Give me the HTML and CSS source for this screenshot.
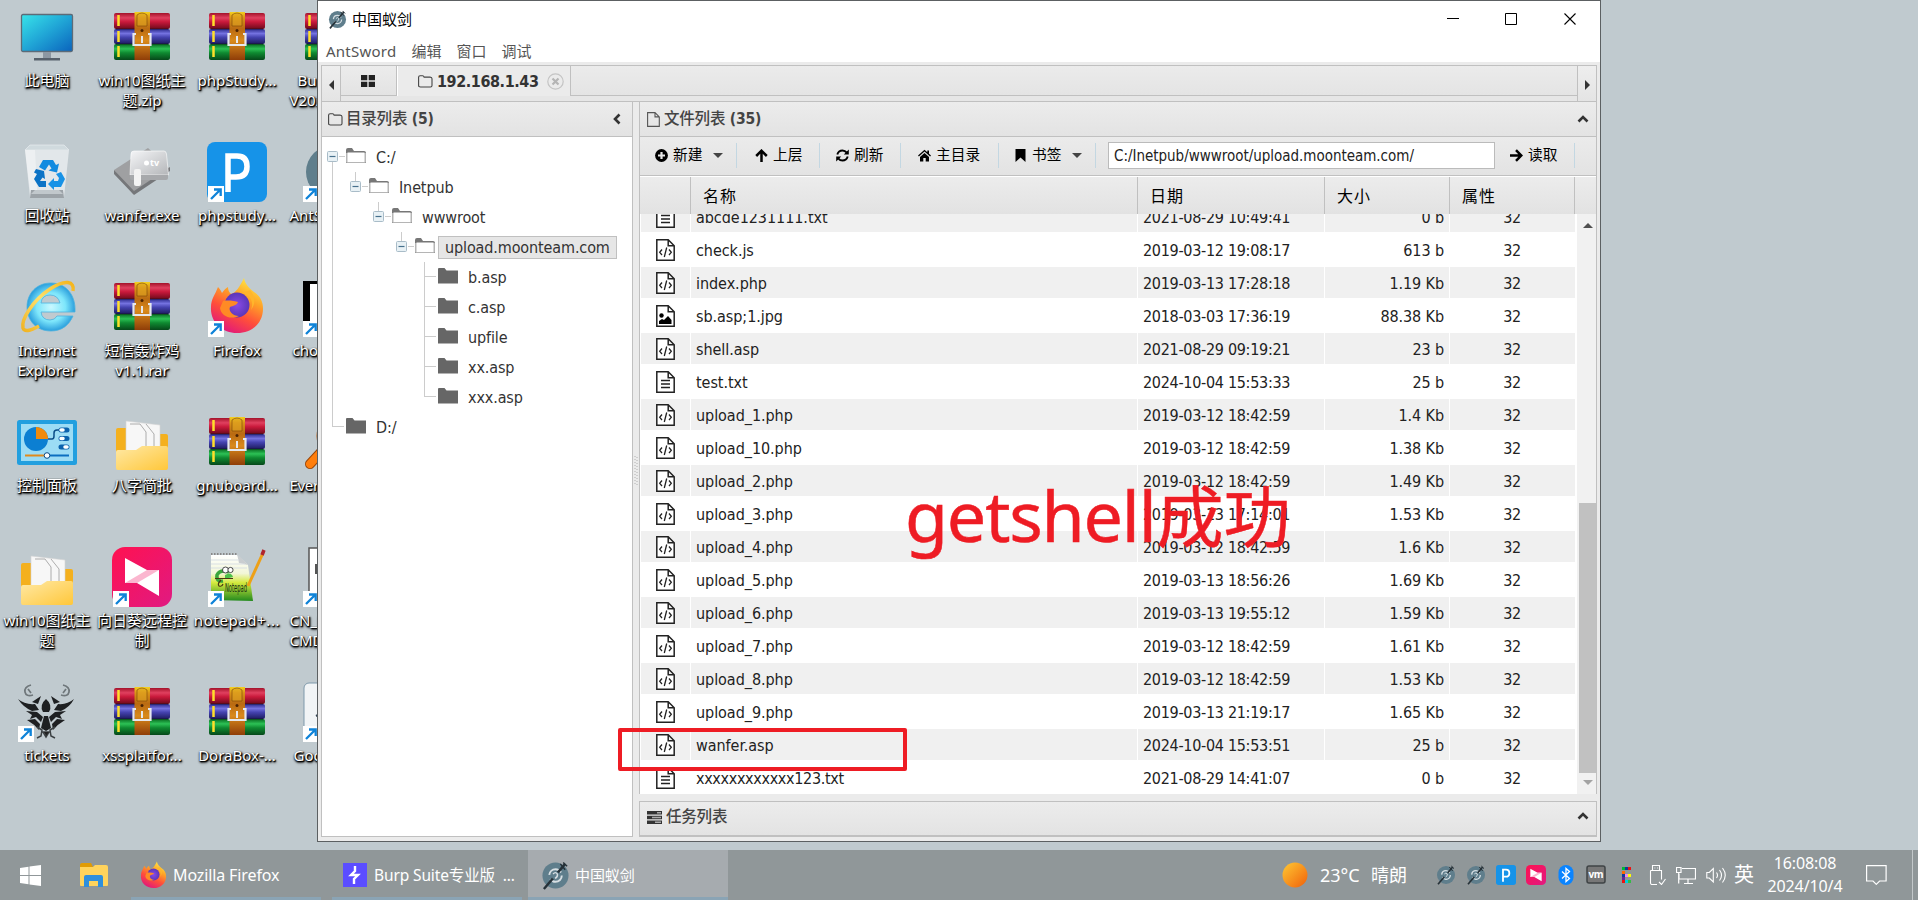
FILE: index.html
```html
<!DOCTYPE html>
<html lang="zh-CN">
<head>
<meta charset="utf-8">
<title>中国蚁剑</title>
<link rel="stylesheet" href="styles.css">
</head>
<body>
<svg class="defs" aria-hidden="true">
  <defs>
    <linearGradient id="red" x1="0" y1="0" x2="0" y2="1"><stop offset="0" stop-color="#a3122a"/><stop offset=".3" stop-color="#e0405f"/><stop offset=".55" stop-color="#c9193b"/><stop offset="1" stop-color="#6d0a1c"/></linearGradient>
    <linearGradient id="blue" x1="0" y1="0" x2="0" y2="1"><stop offset="0" stop-color="#2b2a8c"/><stop offset=".3" stop-color="#7472e0"/><stop offset=".55" stop-color="#4543b0"/><stop offset="1" stop-color="#1d1b5e"/></linearGradient>
    <linearGradient id="green" x1="0" y1="0" x2="0" y2="1"><stop offset="0" stop-color="#086a20"/><stop offset=".3" stop-color="#2cc155"/><stop offset=".55" stop-color="#0f8a31"/><stop offset="1" stop-color="#06481a"/></linearGradient>
    <linearGradient id="belt" x1="0" y1="0" x2="0" y2="1"><stop offset="0" stop-color="#f5d21f"/><stop offset=".12" stop-color="#d99417"/><stop offset=".35" stop-color="#b96a12"/><stop offset=".6" stop-color="#d98a1c"/><stop offset="1" stop-color="#8f3d08"/></linearGradient>
    <linearGradient id="screen" x1="0" y1="0" x2="1" y2="1"><stop offset="0" stop-color="#38e4ea"/><stop offset=".5" stop-color="#20a5d6"/><stop offset="1" stop-color="#0a63bd"/></linearGradient>
    <linearGradient id="fold" x1="0" y1="0" x2="1" y2="1"><stop offset="0" stop-color="#ffe9a6"/><stop offset="1" stop-color="#ffc73a"/></linearGradient>
    <linearGradient id="foxg" x1=".8" y1="0" x2=".3" y2="1"><stop offset="0" stop-color="#fff14a"/><stop offset=".35" stop-color="#ffa226"/><stop offset=".65" stop-color="#ff4f3a"/><stop offset="1" stop-color="#e0157e"/></linearGradient>
    <radialGradient id="foxp"><stop offset="0" stop-color="#8a4be6"/><stop offset="1" stop-color="#5a36b8"/></radialGradient>
    <radialGradient id="ieg"><stop offset="0" stop-color="#c9f8ff"/><stop offset=".6" stop-color="#7de6fb"/><stop offset="1" stop-color="#2b9fdd"/></radialGradient>
    <linearGradient id="gold" x1="0" y1="1" x2="1" y2="0"><stop offset="0" stop-color="#f0b323"/><stop offset=".5" stop-color="#ffe06a"/><stop offset="1" stop-color="#f4b41c"/></linearGradient>
    <linearGradient id="pink" x1="0" y1="0" x2="1" y2="1"><stop offset="0" stop-color="#ff1150"/><stop offset="1" stop-color="#e01a82"/></linearGradient>
    <linearGradient id="silver" x1="0" y1="0" x2="1" y2="1"><stop offset="0" stop-color="#f4f5f7"/><stop offset="1" stop-color="#b4b6b9"/></linearGradient>
    <linearGradient id="sun" x1="0" y1="0" x2="1" y2="1"><stop offset="0" stop-color="#ffc933"/><stop offset="1" stop-color="#f0600a"/></linearGradient>
    <linearGradient id="notepad" x1="0" y1="0" x2="0" y2="1"><stop offset="0" stop-color="#ffffff"/><stop offset=".4" stop-color="#f2f6d8"/><stop offset=".6" stop-color="#d5ea3e"/><stop offset="1" stop-color="#228a1d"/></linearGradient>

    <symbol id="i-rar" viewBox="0 0 60 60">
      <rect x="2" y="6" width="56" height="16" rx="2" fill="url(#red)"/>
      <rect x="2" y="22" width="56" height="15" rx="2" fill="url(#blue)"/>
      <rect x="2" y="37" width="56" height="16" rx="2" fill="url(#green)"/>
      <path d="M6.500 8v11M6.500 24v11M6.500 39v11" stroke="#ffdf2b" stroke-width="2.500"/>
      <path d="M4 22h52M4 37h52" stroke="#111" stroke-opacity=".5"/>
      <rect x="22.500" y="5" width="15.500" height="48" fill="url(#belt)"/>
      <path d="M25 8q5-4 10 0v11H25z" fill="#e0a321" fill-opacity=".6" stroke="#7a4408" stroke-width=".6"/>
      <circle cx="30" cy="23.500" r="1.500" fill="#4b2303"/>
      <path d="M24 27h-2.500v11h17V27H36" fill="none" stroke="#e6e8ee" stroke-width="2.200"/>
      <path d="M30 29v7" stroke="#e6e8ee" stroke-width="2"/>
    </symbol>
    <symbol id="i-shortcut" viewBox="0 0 16 16"><rect width="16" height="16" fill="#fff"/><path d="M3 13 12 4M6 3.500h6.700V10" fill="none" stroke="#0f83d8" stroke-width="2.300"/></symbol>
    <symbol id="i-pc" viewBox="0 0 60 60">
      <rect x="4.500" y="7.500" width="51" height="37" rx="1.500" fill="url(#screen)" stroke="#5d6b78" stroke-width="1.300"/>
      <path d="M26 45h8v7h-8z" fill="#8c97a2"/><path d="M17 51h26v2.500H17z" fill="#56606b"/>
    </symbol>
    <symbol id="i-bin" viewBox="0 0 60 60">
      <path d="M8 8 13 3h34l5 5z" fill="#d0dade" stroke="#e8edef" stroke-width=".7"/>
      <path d="M8 8h44l-5 47H13z" fill="#e2e7ea"/><path d="M8 8h10l2 40h-7z" fill="#fff" fill-opacity=".4"/>
      <path d="M14 48h32l1 8H13z" fill="#9ca3a8"/><path d="M18 48h24l4 4H14z" fill="#c1c8cc"/>
      <path d="M22 25l4-7h10l3 5 3-1.500-2 9-8.500-2 3-2-2.500-4-4 6z" fill="#128be0"/>
      <path d="M19 27l8 2 1 8-2.500-1.500-2.500 3.500h6v6h-7l-5-8 3-5-3-1.500z" fill="#0b73c6"/>
      <path d="M31 42l6-6v3h4l1-3-3-4 5-2 4 7-4 8h-7v3z" fill="#1892e6"/>
    </symbol>
    <symbol id="i-exe" viewBox="0 0 60 60">
      <path d="M2 28 36 6 58 27 21 52z" fill="#9fa0a2"/><path d="M2 28 22 49 58 25v4L22 53 2 32z" fill="#75777a"/>
      <path d="M22 9h30q2 0 2.500 3l2 21H18l1-21q0-3 3-3z" fill="url(#silver)" stroke="#fff" stroke-width=".6"/>
      <path d="M18 33h38v3q0 2-2 2H20q-2 0-2-2z" fill="#a7a9ac"/>
      <rect x="22" y="27" width="7" height="17" rx="2" fill="#f3f3f3"/>
      <text x="38" y="24" font-family="Noto Sans" font-size="9" font-weight="700" fill="#fff">tv</text><circle cx="34.500" cy="21" r="2.500" fill="#fff"/>
    </symbol>
    <symbol id="i-phps" viewBox="0 0 60 60"><rect width="60" height="60" rx="8" fill="#1693e8"/><path d="M21 50V14h9q10 0 10 10.500T29 35h-7" fill="none" stroke="#fff" stroke-width="5.500"/></symbol>
    <symbol id="i-ant" viewBox="0 0 60 60">
      <circle cx="30" cy="30" r="27" fill="#5f7e8c"/><circle cx="30" cy="30" r="13" fill="none" stroke="#d7dfe3" stroke-width="4" stroke-dasharray="32 9"/>
      <path d="M6 58 50 6" stroke="#263138" stroke-width="5"/><path d="M40 6l10 12M46 3l8 8" stroke="#263138" stroke-width="3"/>
      <circle cx="30" cy="30" r="8" fill="#5f7e8c"/><path d="M25 27q5-6 9 0 1 6-5 9" fill="none" stroke="#d7dfe3" stroke-width="3"/>
    </symbol>
    <symbol id="i-ie" viewBox="0 0 60 60">
      <path fill-rule="evenodd" d="M34 6C19 6 10 17 10 30s9 24 24 24c11 0 18-6 22-15H40q-2 4-7 4-8 0-9-8h34C59 18 49 6 34 6zM24 26q1-8 9-8t10 8z" fill="url(#ieg)" stroke="#4bb3de" stroke-width=".8"/>
      <path d="M56 14C58 4 48 2 33 12 15 24 4 43 6 51q2 6 16-2" fill="none" stroke="url(#gold)" stroke-width="3.500"/>
    </symbol>
    <symbol id="i-fox" viewBox="0 0 60 60">
      <path d="M37 1c1 6 5 10 10 14 6 4 9 9 9 17 0 14-11 24-26 24S3 45 4 30c0-8 4-12 7-20 2 2 3 4 4 6 2-3 4-5 6-6 0 3 1 5 3 7 5-1 9-8 13-16z" fill="url(#foxg)"/>
      <circle cx="30" cy="28" r="12.500" fill="url(#foxp)"/>
      <path d="M16 24c5-1 12 0 15 1-1 3-5 4-8 5-2 4 3 9 9 9-9 4-18 0-19-8z" fill="#ff8a25"/><path d="M35 16c9 2 12 9 9 17 6-8 3-15-1-20z" fill="#ffb52c"/>
    </symbol>
    <symbol id="i-panel" viewBox="0 0 60 60">
      <rect y="8" width="60" height="45" rx="2.500" fill="#229fdf"/><rect x="4" y="12" width="52" height="37" fill="#9cdcf5"/>
      <circle cx="19" cy="27" r="12" fill="#0c7fd2"/><path d="M19 27V15a12 12 0 0 1 12 12z" fill="#f08a0c"/>
      <path d="M31 27h4q2 0 2-3v-3q0-3 3-3h4" fill="none" stroke="#0b4c88" stroke-width="1.500"/>
      <path d="M44 18h6M44 26.500h6M44 35h6" stroke="#0b62ad" stroke-width="5" stroke-linecap="round"/><path d="M44 18h2M44 26.500h2M48 35h2" stroke="#fff" stroke-width="3.500" stroke-linecap="round"/>
      <path d="M8 43.500h22" stroke="#e08a1c" stroke-width="2"/><path d="M30 43.500h22" stroke="#0b6fc0" stroke-width="2"/><circle cx="30" cy="43.500" r="2.800" fill="#fff" stroke="#0b4c88"/>
    </symbol>
    <symbol id="i-folder" viewBox="0 0 60 60">
      <path d="M4 18q0-2 2-2h14l6 6h28q2 0 2 2v20H4z" fill="#f4b01e"/>
      <path d="M14 9 48 13V45H14z" fill="#f7f7f7" stroke="#d3d3d3" stroke-width=".6"/><path d="M18 12h10l6 8v22M34 12l8 10v16" fill="none" stroke="#9a9a9a" stroke-width=".8"/>
      <path d="M4 40q0-2 2-2h18l6-4h24q2 0 2 2v20q0 2-2 2H6q-2 0-2-2z" fill="url(#fold)"/>
    </symbol>
    <symbol id="i-sun" viewBox="0 0 60 60"><rect width="60" height="60" rx="13" fill="url(#pink)"/><path d="M13 11v25h12l22 13V23H35z" fill="#fff"/><path d="M13 36 35 23h12L25 36z" fill="#fbb6cf"/></symbol>
    <symbol id="i-npp" viewBox="0 0 60 60">
      <path d="M4 8h26l11 10 5 36-42-1z" fill="url(#notepad)"/><path d="M30 7l2 9 9 2z" fill="#c9cdd0"/><path d="M4 7h26" stroke="#888" stroke-dasharray="1.500 1.500" stroke-width="2"/>
      <path d="M4 13h28M4 17h34M4 21h36" stroke="#d9dfe4"/>
      <path d="M22 25q-9-3-12 3-1 7 6 6" fill="none" stroke="#3aa63c" stroke-width="3.500"/><path d="M18 28q6-4 8 2l-8 2z" fill="#4cc04a"/><circle cx="18.500" cy="23" r="3" fill="#fff" stroke="#222" stroke-width=".8"/><circle cx="23.500" cy="23" r="2.600" fill="#fff" stroke="#222" stroke-width=".8"/>
      <path d="M8 31.500h18M14 33q-4 4-2 6 3 1 4-2" fill="none" stroke="#4c3512" stroke-width="1.200"/><text x="18" y="45" font-family="DejaVu Sans Condensed" font-size="12" textLength="22" lengthAdjust="spacingAndGlyphs" fill="#213213">Notepad</text>
      <path d="M41 39 56 6" stroke="#eda017" stroke-width="3"/><path d="M55 8l2-5" stroke="#b0242d" stroke-width="3.500"/>
    </symbol>
    <symbol id="i-deer" viewBox="0 0 60 60">
      <path d="M14 3Q7 5 8 10t8 3M46 3q7 2 6 7t-8 3M11 7l3 4M49 7l-3 4" fill="none" stroke="#6f777b" stroke-width="1.700"/>
      <path d="M1 17q7 6 17 5l4 6-7 1Q6 25 1 17zM57 17q-7 6-16 5l-4 6 7 1q9-4 13-12zM29 17q7 6 3 13h-6q-4-7 3-13zM15 20l9-6-3 8zM43 20l-9-6 3 8zM9 29l11 1 6 5-2 5-5-5-6 2 2-4zM49 29l-11 1-6 5 2 5 5-5 6 2-2-4zM10 38l8-1 5 5-1 6q-5-6-12-10zM48 38l-8-1-5 5 1 6q5-6 12-10zM27 34h4l3 12-5 3-5-3z" fill="#1e2022"/>
      <path d="M20 45l5 3-1 6-4 2M38 45l-5 3 1 6 4 2M26 50h6l-3 5z" fill="none" stroke="#3b4043" stroke-width="1.500"/><path d="M27 50h5l-3 4z" fill="#222"/>
    </symbol>

    <symbol id="g-folder" viewBox="0 0 15 13"><path d="M.6 10.500V2.200Q.6.700 2.100.7h2.500q1.200 0 1.500 1.400h6Q14 2.200 14 3.800v6.700q0 1.500-1.500 1.500h-10Q.6 12 .6 10.500z" fill="none" stroke="#444" stroke-width="1.100"/></symbol>
    <symbol id="g-doc" viewBox="0 0 13 15"><path d="M.6.600h7.400l4.300 4.300v9.500H.6zM8 .6v4.300h4.300" fill="none" stroke="#555" stroke-width="1.100"/></symbol>
    <symbol id="t-open" viewBox="0 0 20 16"><path d="M0 2q0-2 2-2h4l2 3h10q2 0 2 2v10H0z" fill="#777"/><path d="M0 5h20v8.500q0 1.500-1.500 1.500h-17Q0 15 0 13.500z" fill="#b5b5b5"/><path d="M1.500 4.500h17v9.500h-17z" fill="#fff"/></symbol>
    <symbol id="t-closed" viewBox="0 0 20 16"><path d="M0 1q0-1 1-1h5.500L8.500 2.500H20V15.500H0z" fill="#666"/></symbol>
    <symbol id="t-minus" viewBox="0 0 11 11"><rect x=".5" y=".5" width="10" height="10" rx="1" fill="#e8f1f5" stroke="#a9bcc8"/><path d="M2.500 5.500h6" stroke="#46708c" stroke-width="1.200"/></symbol>
    <symbol id="f-code" viewBox="0 0 19 22"><path d="M.8.8h11.400l6 6v14.400H.8zM12.200.8v6h6" fill="#fff" stroke="#222" stroke-width="1.500"/><path d="M6 10.500 3.700 13.300 6 16M13 10.500l2.300 2.800L13 16M10.700 8.500 8.300 18" fill="none" stroke="#222" stroke-width="1.300"/></symbol>
    <symbol id="f-text" viewBox="0 0 19 22"><path d="M.8.8h11.400l6 6v14.400H.8zM12.200.8v6h6" fill="#fff" stroke="#222" stroke-width="1.500"/><path d="M5 9.500h9M5 13h9M5 16.500h9" stroke="#222" stroke-width="1.400"/></symbol>
    <symbol id="f-img" viewBox="0 0 19 22"><path d="M.8.8h11.400l6 6v14.400H.8zM12.200.8v6h6" fill="#fff" stroke="#222" stroke-width="1.500"/><circle cx="5.500" cy="10.500" r="2.200" fill="#000"/><path d="M3 19v-3l3-2 2 1 4-4 3.500 4v4z" fill="#000"/></symbol>
    <symbol id="c-up" viewBox="0 0 12 8"><path d="M1.500 6.500 6 2l4.500 4.500" fill="none" stroke="#333" stroke-width="2.600"/></symbol>
  </defs>
</svg>

<main class="desktop">
  <section class="shortcuts">
    <div class="app"><svg class="pic"><use href="#i-pc"/></svg><span>此电脑</span></div>
    <div class="app"><svg class="pic"><use href="#i-rar"/></svg><span>win10图纸主<br>题.zip</span></div>
    <div class="app"><svg class="pic"><use href="#i-rar"/></svg><span>phpStudy...</span></div>
    <div class="app edge"><svg class="pic"><use href="#i-rar"/></svg><span class="in8">Burp</span><span>V202</span></div>

    <div class="app"><svg class="pic"><use href="#i-bin"/></svg><span>回收站</span></div>
    <div class="app"><svg class="pic"><use href="#i-exe"/></svg><span>wanfer.exe</span></div>
    <div class="app"><svg class="pic"><use href="#i-phps"/></svg><svg class="link"><use href="#i-shortcut"/></svg><span>phpstudy...</span></div>
    <div class="app edge"><svg class="pic"><use href="#i-ant"/></svg><svg class="link"><use href="#i-shortcut"/></svg><span>AntSw</span></div>

    <div class="app"><svg class="pic"><use href="#i-ie"/></svg><span>Internet<br>Explorer</span></div>
    <div class="app"><svg class="pic"><use href="#i-rar"/></svg><span>短信轰炸鸡<br>v1.1.rar</span></div>
    <div class="app"><svg class="pic"><use href="#i-fox"/></svg><svg class="link"><use href="#i-shortcut"/></svg><span>Firefox</span></div>
    <div class="app edge"><svg class="pic" viewBox="0 0 60 60"><path d="M0 4h60v40H0z"/><path d="M7 7h50v37H7z" fill="#fff"/></svg><svg class="link"><use href="#i-shortcut"/></svg><span class="in3">chon</span></div>

    <div class="app"><svg class="pic"><use href="#i-panel"/></svg><span>控制面板</span></div>
    <div class="app"><svg class="pic"><use href="#i-folder"/></svg><span>八字简批</span></div>
    <div class="app"><svg class="pic"><use href="#i-rar"/></svg><span>gnuboard...</span></div>
    <div class="app edge"><svg class="pic" viewBox="0 0 60 60"><circle cx="34" cy="24" r="18" fill="none" stroke="#b85a10" stroke-width="5"/><path d="M7 52 20 38" stroke="#9a4607" stroke-width="10" stroke-linecap="round"/><path d="M7 52 20 38" stroke="#ff7e0c" stroke-width="8" stroke-linecap="round"/></svg><span class="snug">Every</span></div>

    <div class="app"><svg class="pic"><use href="#i-folder"/></svg><span>win10图纸主<br>题</span></div>
    <div class="app"><svg class="pic"><use href="#i-sun"/></svg><svg class="link"><use href="#i-shortcut"/></svg><span>向日葵远程控<br>制</span></div>
    <div class="app"><svg class="pic"><use href="#i-npp"/></svg><svg class="link"><use href="#i-shortcut"/></svg><span class="wide">notepad+...</span></div>
    <div class="app edge"><svg class="pic" viewBox="0 0 60 60"><path d="M6 1h50v56H6z" fill="#fff" stroke="#555" stroke-width="1.500"/><path d="M12 17h12v10H12z" fill="#555"/></svg><svg class="link"><use href="#i-shortcut"/></svg><span>CN_D</span><span>CMD</span></div>

    <div class="app"><svg class="pic"><use href="#i-deer"/></svg><svg class="link"><use href="#i-shortcut"/></svg><span>tickets</span></div>
    <div class="app"><svg class="pic"><use href="#i-rar"/></svg><span>xssplatfor...</span></div>
    <div class="app"><svg class="pic"><use href="#i-rar"/></svg><span>DoraBox-...</span></div>
    <div class="app edge"><svg class="pic" viewBox="0 0 60 60"><rect x="1" y="1" width="58" height="58" rx="5" fill="#f1f4f6" stroke="#7f99ab"/><path d="M13 34l4-2" stroke="#345" stroke-width="2"/></svg><svg class="link"><use href="#i-shortcut"/></svg><span class="in4">Goog</span></div>
  </section>

  <section class="window">
    <header class="titlebar">
      <svg class="logo"><use href="#i-ant"/></svg><h1>中国蚁剑</h1>
      <svg class="winbtns" viewBox="0 0 70 12"><path d="M0 5.500h12M58.500.500h11v11h-11z" fill="none" stroke="#000"/></svg>
      <svg class="closebtn" viewBox="0 0 12 12"><path d="M.5.500 11.500 11.500M11.500.500.5 11.500" stroke="#000" stroke-width="1.100"/></svg>
    </header>
    <nav class="menu"><span class="latin">AntSword</span><span>编辑</span><span>窗口</span><span>调试</span></nav>

    <div class="shell">
      <div class="tabs">
        <div class="scroll-l"><i class="tri left"></i></div>
        <div class="tab home"><svg viewBox="0 0 14 12" width="14" height="12"><path d="M0 0h6.300v5.300H0zM7.700 0H14v5.300H7.700zM0 6.700h6.300V12H0zM7.700 6.700H14V12H7.700z" fill="#222"/></svg></div>
        <div class="tab active"><svg width="15" height="13"><use href="#g-folder"/></svg><b>192.168.1.43</b><svg class="x" viewBox="0 0 17 17" width="17" height="17"><circle cx="8.500" cy="8.500" r="7.700" fill="none" stroke="#c4c4c4" stroke-width="1.200"/><path d="M5.500 5.500l6 6M11.500 5.500l-6 6" stroke="#b5b5b5" stroke-width="2.200"/></svg></div>
        <div class="rest"></div>
        <div class="scroll-r"><i class="tri right"></i></div>
      </div>

      <div class="panes">
        <section class="pane dirs">
          <header class="cap"><svg width="15" height="13"><use href="#g-folder"/></svg><b>目录列表 (5)</b><svg class="chev" viewBox="0 0 8 12" width="8" height="12"><path d="M6.500 1.500 2 6l4.500 4.500" fill="none" stroke="#333" stroke-width="2.600"/></svg></header>
          <div class="tree">
            <div class="node"><i class="cell exp first"><svg><use href="#t-minus"/></svg></i><svg class="fi"><use href="#t-open"/></svg><span>C:/</span></div>
            <div class="node"><i class="cell bar"></i><i class="cell exp"><svg><use href="#t-minus"/></svg></i><svg class="fi"><use href="#t-open"/></svg><span>Inetpub</span></div>
            <div class="node"><i class="cell bar"></i><i class="cell"></i><i class="cell exp"><svg><use href="#t-minus"/></svg></i><svg class="fi"><use href="#t-open"/></svg><span>wwwroot</span></div>
            <div class="node"><i class="cell bar"></i><i class="cell"></i><i class="cell"></i><i class="cell exp"><svg><use href="#t-minus"/></svg></i><svg class="fi"><use href="#t-open"/></svg><span class="sel">upload.moonteam.com</span></div>
            <div class="node"><i class="cell bar"></i><i class="cell"></i><i class="cell"></i><i class="cell"></i><i class="cell bar tee"></i><svg class="fi"><use href="#t-closed"/></svg><span>b.asp</span></div>
            <div class="node"><i class="cell bar"></i><i class="cell"></i><i class="cell"></i><i class="cell"></i><i class="cell bar tee"></i><svg class="fi"><use href="#t-closed"/></svg><span>c.asp</span></div>
            <div class="node"><i class="cell bar"></i><i class="cell"></i><i class="cell"></i><i class="cell"></i><i class="cell bar tee"></i><svg class="fi"><use href="#t-closed"/></svg><span>upfile</span></div>
            <div class="node"><i class="cell bar"></i><i class="cell"></i><i class="cell"></i><i class="cell"></i><i class="cell bar tee"></i><svg class="fi"><use href="#t-closed"/></svg><span>xx.asp</span></div>
            <div class="node"><i class="cell bar"></i><i class="cell"></i><i class="cell"></i><i class="cell"></i><i class="cell bar tee last"></i><svg class="fi"><use href="#t-closed"/></svg><span>xxx.asp</span></div>
            <div class="node"><i class="cell bar tee last"></i><svg class="fi"><use href="#t-closed"/></svg><span>D:/</span></div>
          </div>
        </section>
        <div class="split"><svg viewBox="0 0 4 30" width="4" height="30"><path d="M1 1v28M3 2v28" stroke="#b0b0b0" stroke-dasharray="1 2"/></svg></div>
        <div class="rightcol">
          <section class="pane files">
            <header class="cap"><svg width="13" height="15"><use href="#g-doc"/></svg><b>文件列表 (35)</b><svg class="chev" width="12" height="8"><use href="#c-up"/></svg></header>
            <div class="toolbar">
              <div class="btn w96"><svg viewBox="0 0 13 13"><circle cx="6.500" cy="6.500" r="6.400"/><path d="M6.500 3v7M3 6.500h7" stroke="#e8e8e8" stroke-width="2.200"/></svg><span>新建</span><i class="caret"></i></div>
              <div class="btn w83"><svg viewBox="0 0 13 13"><path d="M6.500 13V2.500M1.200 7l5.300-5.300L11.800 7" fill="none" stroke="#000" stroke-width="2.500"/></svg><span>上层</span></div>
              <div class="btn w81"><svg viewBox="0 0 13 13"><path d="M1.300 5.500Q2.500 1.500 6.500 1.500q2.500 0 4.300 2.200M11.700 7.500q-1.200 4-5.200 4-2.500 0-4.300-2.200" fill="none" stroke="#000" stroke-width="1.900"/><path d="M12.800.500V5.500H7.800zM.2 12.500V7.500h5z"/></svg><span>刷新</span></div>
              <div class="btn w98"><svg viewBox="0 0 13 13"><path d="M6.500.800 0 6.500l.9 1 5.600-5 5.600 5 .9-1-2-1.800V1.500H9.300v1.700z"/><path d="M6.500 4 2 8v4.500h3.300V9h2.400v3.500H11V8z"/></svg><span>主目录</span></div>
              <div class="btn w96"><svg viewBox="0 0 13 13"><path d="M1.500 0h10v13l-5-4.500-5 4.500z"/></svg><span>书签</span><i class="caret"></i></div>
              <div class="addr">C:/Inetpub/wwwroot/upload.moonteam.com/</div>
              <div class="btn w80"><svg viewBox="0 0 13 13"><path d="M0 6.500h10.500M6 1.200l5.300 5.300L6 11.800" fill="none" stroke="#000" stroke-width="2.500"/></svg><span>读取</span></div>
            </div>
            <div class="row thead"><b></b><b>名称</b><b>日期</b><b>大小</b><b>属性</b><b></b></div>
            <div class="scroller">
              <div class="rows">
                <div class="row odd"><i><svg><use href="#f-text"/></svg></i><i>abcde1231111.txt</i><i>2021-08-29 10:49:41</i><i>0 b</i><i>32</i></div>
                <div class="row"><i><svg><use href="#f-code"/></svg></i><i>check.js</i><i>2019-03-12 19:08:17</i><i>613 b</i><i>32</i></div>
                <div class="row odd"><i><svg><use href="#f-code"/></svg></i><i>index.php</i><i>2019-03-13 17:28:18</i><i>1.19 Kb</i><i>32</i></div>
                <div class="row"><i><svg><use href="#f-img"/></svg></i><i>sb.asp;1.jpg</i><i>2018-03-03 17:36:19</i><i>88.38 Kb</i><i>32</i></div>
                <div class="row odd"><i><svg><use href="#f-code"/></svg></i><i>shell.asp</i><i>2021-08-29 09:19:21</i><i>23 b</i><i>32</i></div>
                <div class="row"><i><svg><use href="#f-text"/></svg></i><i>test.txt</i><i>2024-10-04 15:53:33</i><i>25 b</i><i>32</i></div>
                <div class="row odd"><i><svg><use href="#f-code"/></svg></i><i>upload_1.php</i><i>2019-03-12 18:42:59</i><i>1.4 Kb</i><i>32</i></div>
                <div class="row"><i><svg><use href="#f-code"/></svg></i><i>upload_10.php</i><i>2019-03-12 18:42:59</i><i>1.38 Kb</i><i>32</i></div>
                <div class="row odd"><i><svg><use href="#f-code"/></svg></i><i>upload_2.php</i><i>2019-03-12 18:42:59</i><i>1.49 Kb</i><i>32</i></div>
                <div class="row"><i><svg><use href="#f-code"/></svg></i><i>upload_3.php</i><i>2019-03-13 17:14:01</i><i>1.53 Kb</i><i>32</i></div>
                <div class="row odd"><i><svg><use href="#f-code"/></svg></i><i>upload_4.php</i><i>2019-03-12 18:42:59</i><i>1.6 Kb</i><i>32</i></div>
                <div class="row"><i><svg><use href="#f-code"/></svg></i><i>upload_5.php</i><i>2019-03-13 18:56:26</i><i>1.69 Kb</i><i>32</i></div>
                <div class="row odd"><i><svg><use href="#f-code"/></svg></i><i>upload_6.php</i><i>2019-03-13 19:55:12</i><i>1.59 Kb</i><i>32</i></div>
                <div class="row"><i><svg><use href="#f-code"/></svg></i><i>upload_7.php</i><i>2019-03-12 18:42:59</i><i>1.61 Kb</i><i>32</i></div>
                <div class="row odd"><i><svg><use href="#f-code"/></svg></i><i>upload_8.php</i><i>2019-03-12 18:42:59</i><i>1.53 Kb</i><i>32</i></div>
                <div class="row"><i><svg><use href="#f-code"/></svg></i><i>upload_9.php</i><i>2019-03-13 21:19:17</i><i>1.65 Kb</i><i>32</i></div>
                <div class="row odd"><i><svg><use href="#f-code"/></svg></i><i>wanfer.asp</i><i>2024-10-04 15:53:51</i><i>25 b</i><i>32</i></div>
                <div class="row"><i><svg><use href="#f-text"/></svg></i><i class="tight">xxxxxxxxxxxx123.txt</i><i>2021-08-29 14:41:07</i><i>0 b</i><i>32</i></div>
              </div>
              <div class="track"><i class="tri up"></i><div class="thumb"></div><i class="tri down"></i></div>
            </div>
          </section>
          <section class="pane tasks">
            <header class="cap"><svg viewBox="0 0 15 13" width="15" height="13"><path d="M0 0h15v3.500H0zM0 4.700h15v3.500H0zM0 9.400h15v3.500H0z" fill="#333"/><path d="M10 1h4v1.500h-4zM5 5.700h9v1.500H5zM8 10.400h6v1.500H8z" fill="#aaa"/></svg><b>任务列表</b><svg class="chev" width="12" height="8"><use href="#c-up"/></svg></header>
          </section>
        </div>
      </div>
    </div>
  </section>

  <div class="mark-box"></div>
  <div class="mark-text"><span>getshell</span><em>成功</em></div>
</main>

<footer class="taskbar">
  <svg class="start" viewBox="0 0 21 21"><path d="M0 3 8.500 1.800V10H0zM9.500 1.600 21 0v10H9.500zM0 11h8.500v8.200L0 18zM9.500 11H21v10L9.500 19.400z" fill="#fff"/></svg>
  <svg class="explorer" viewBox="0 0 28 24"><path d="M0 2Q0 0 2 0h9l2 4H0z" fill="#e09b05"/><path d="M0 4h13l2-2h11q2 0 2 2v18q0 1-1 1H1q-1 0-1-1z" fill="#ffd35c"/><path d="M4 24V14q0-2 2-2h15q2 0 2 2v10h-5v-6h-9v6z" fill="#2f8fdc"/></svg>
  <div class="task ff"><svg><use href="#i-fox"/></svg><span>Mozilla Firefox</span></div>
  <div class="task burp"><svg viewBox="0 0 24 24"><path d="M0 0h24v24H0z" fill="#5b4dff"/><path d="M12 3v5l-4 4h7l-4 4v5" fill="none" stroke="#fff" stroke-width="2.400"/></svg><span>Burp Suite专业版&nbsp; ...</span></div>
  <div class="task on"><svg><use href="#i-ant"/></svg><span>中国蚁剑</span></div>
  <div class="tray">
    <svg class="weather" viewBox="0 0 26 26"><circle cx="13" cy="13" r="12.500" fill="url(#sun)"/></svg>
    <span class="temp">23°C</span><span class="sky">晴朗</span>
    <div class="icons">
      <svg><use href="#i-ant"/></svg>
      <svg><use href="#i-ant"/></svg>
      <svg><use href="#i-phps"/></svg>
      <svg><use href="#i-sun"/></svg>
      <svg viewBox="0 0 20 20"><rect x="2.500" width="15" height="20" rx="7.500" fill="#0a84ff"/><path d="M6 6.500 13.500 13.500 10 16.500v-13l3.500 3L6 13.500" fill="none" stroke="#fff" stroke-width="1.300"/></svg>
      <svg viewBox="0 0 20 20"><rect x="1" y="1" width="18" height="17" rx="2" fill="#777" stroke="#3f4446" stroke-width="1.500"/><text x="2.500" y="12.500" font-family="Noto Sans" font-size="10" font-weight="700" textLength="15" fill="#fff">vm</text></svg>
      <svg viewBox="0 0 20 20"><path d="M6 2h3v3H6z" fill="#0b3"/><path d="M9 2h3v3H9zM6 9h3v3H6z" fill="#113a9c"/><path d="M12 2h3v3h-3zM6 15h3v3H6z" fill="#e11"/><path d="M6 6h3v3H6z" fill="#f60"/><path d="M9 9h3v3H9z" fill="#e8e"/><path d="M12 9h3v3h-3z" fill="#ff0"/><path d="M6 12h3v3H6z" fill="#629"/><path d="M9 15h3v3H9z" fill="#0cd"/><path d="M12 15h3v3h-3z" fill="#3b4"/></svg>
      <svg viewBox="0 0 20 20"><path d="M6.500 5.500v-5h7v5M4.500 5.500h11v9M4.500 5.500v12.500q0 1.500 1.500 1.500h5M13 17l2.500 2.500 4-5.500M8.500 3h.8M11 3h.8" fill="none" stroke="#fff" stroke-width="1.100"/></svg>
      <svg viewBox="0 0 20 20"><path d="M6 3.500h13.500v10.500H3v-5M.5 2.500h4.500v5H.5zM2.700 7.500v11M8 18.500h9M12 14v4" fill="none" stroke="#fff" stroke-width="1.200"/></svg>
      <svg viewBox="0 0 20 20"><path d="M.8 7.500v5.500h2.500l4 4V3.500l-4 4zM10.500 7.500q2 2.700 0 5.500M13.500 5q4 5.200 0 10.500M16.500 3q5.500 7.200 0 14.500" fill="none" stroke="#fff" stroke-width="1.100"/></svg>
    </div>
    <span class="ime">英</span>
    <div class="clock"><span>16:08:08</span><span>2024/10/4</span></div>
    <svg class="note" viewBox="0 0 21 20"><path d="M.6.600h19.500v15.400h-6.500l-3.300 3.300L7 16H.6z" fill="none" stroke="#fff" stroke-width="1.200"/></svg>
    <i class="peek"></i>
  </div>
</footer>
</body>
</html>
```

FILE: styles.css
```css
* { box-sizing: border-box; }
body {
  margin: 0; width: 1918px; height: 900px; overflow: hidden;
  display: flex; flex-direction: column; background: #c0cacf;
  font-family: "DejaVu Sans Condensed", "Noto Sans CJK SC", sans-serif; font-size: 16px; color: #222;
}
h1 { margin: 0; font-weight: 400; }
i, em { font-style: normal; }
svg { flex: none; display: block; }
.defs { position: absolute; width: 0; height: 0; }

.desktop { position: relative; height: 850px; flex: none; overflow: hidden; }

/* Desktop shortcuts */
.shortcuts { display: grid; grid-template-columns: repeat(4, 95px); grid-auto-rows: 135px; width: 380px; padding-top: 7px; }
.app { position: relative; display: flex; flex-direction: column; align-items: center; white-space: nowrap; text-align: center; left: -.5px; }
.app span {
  font: 15px/20px "Noto Sans", "Noto Sans CJK SC", sans-serif; color: #fff;
  text-shadow: 1px 1px 2px #000, 0 1px 2px #000, 1px 1px 1px #000, 1px 2px 3px rgba(0, 0, 0, .6);
}
.app .wide { letter-spacing: .6px; }
.app .snug { letter-spacing: -.3px; }
.pic { width: 60px; height: 60px; margin-bottom: 3px; }
.link { position: absolute; left: 18px; top: 44px; width: 16px; height: 16px; }
.edge { align-items: flex-start; padding-left: 5px; }
.edge .pic { margin-left: 13px; }
.app .in8 { padding-left: 8px; }
.app .in3 { padding-left: 3px; }
.app .in4 { padding-left: 4px; }

/* Application window */
.window {
  position: absolute; left: 317px; top: 0; width: 1284px; height: 842px;
  display: flex; flex-direction: column; background: #fff; border: 1px solid #5c6062;
}
.titlebar { height: 37px; display: flex; align-items: center; padding-left: 10px; }
.logo { width: 19px; height: 19px; }
.titlebar h1 { font: 15px/20px "Noto Sans CJK SC", sans-serif; color: #000; margin-left: 5px; }
.winbtns { width: 70px; height: 12px; margin: 0 0 0 auto; }
.closebtn { width: 12px; height: 12px; margin: 0 24px 0 47px; }
.menu { height: 25px; display: flex; align-items: center; gap: 15px; padding: 2px 0 0 8px; font: 15px/20px "Noto Sans", "Noto Sans CJK SC", sans-serif; color: #555; }
.latin { letter-spacing: .25px; }
.shell { flex: 1; display: flex; flex-direction: column; background: #ebebeb; padding: 3px 3px 4px; }

.tabs { height: 36px; flex: none; display: flex; border: 1px solid #c0c0c0; background: #e6e6e6; border-bottom: 0; }
.tabs > div { display: flex; align-items: center; }
.tabs .scroll-l { width: 19px; justify-content: center; border-right: 1px solid #c0c0c0; padding-top: 3px; background: linear-gradient(#eee, #e4e4e4); }
.tabs .scroll-r { width: 19px; justify-content: center; border-left: 1px solid #c0c0c0; padding-top: 3px; background: linear-gradient(#eee, #e4e4e4); }
.tab { height: 30px; }
.home { width: 56px; padding-right: 2px; justify-content: center; border: solid #c0c0c0; border-width: 0 1px 1px 0; background: linear-gradient(#ececec, #e3e3e3); }
.tabs .active { width: 173px; padding: 1px 0 0 20px; background: #ebebeb; border-left: 1px solid #fff; }
.active b { margin-left: 4px; width: 102px; white-space: nowrap; }
.active .x { margin-left: 8px; }
.rest { flex: 1; height: 30px; border: solid #c0c0c0; border-width: 0 0 1px 1px; background: linear-gradient(#ebebeb, #e4e4e4); }
b { font-weight: 700; color: #333; font-size: 16px; letter-spacing: -.42px; }

.panes { flex: 1; display: flex; min-height: 0; }
.pane { background: #fff; border: 1px solid #c0c0c0; display: flex; flex-direction: column; }
.dirs { width: 312px; }
.split { width: 6px; display: flex; align-items: flex-start; justify-content: center; padding-top: 353px; background: #ebebeb; border-top: 1px solid #c0c0c0; }
.rightcol { flex: 1; display: flex; flex-direction: column; gap: 7px; min-width: 0; }
.files { height: 693px; border-bottom: 0; }
.tasks { height: 36px; border-bottom-width: 2px; }
.cap { height: 35px; flex: none; display: flex; align-items: center; padding: 0 7px 0 7px; background: linear-gradient(#ececec, #e3e3e3); border-bottom: 1px solid #c0c0c0; }
.tasks .cap { border-bottom: 0; height: 33px; padding-bottom: 2px; }
.tasks .chev { margin-bottom: 4px; }
.cap b { margin-left: 4px; font-family: "DejaVu Sans Condensed", "Noto Sans CJK SC Medium", "Noto Sans CJK SC", sans-serif; font-size: 15.500px; letter-spacing: -.2px; line-height: 22px; color: #444; margin-top: -1px; }
.chev { margin-left: auto; }
.dirs .chev { margin-right: 4px; }
.dirs .cap { padding-left: 6px; }
.dirs .cap b { margin-left: 3px; }

/* Directory tree */
.tree { padding-top: 5px; color: #333; }
.node { height: 30px; display: flex; align-items: center; }
.cell { width: 23px; height: 30px; flex: none; display: flex; align-items: center; }
.exp { padding: 0 0 1px 5px; background: linear-gradient(#ccc, #ccc) 17px 14px / 6px 1px no-repeat; }
.exp:not(.first) { background: linear-gradient(#ccc, #ccc) 17px 14px / 6px 1px no-repeat, linear-gradient(#ccc, #ccc) 10px 0 / 1px 10px no-repeat; }
.exp svg { width: 11px; height: 11px; }
.bar { background: linear-gradient(#ccc, #ccc) 10px 0 / 1px 30px no-repeat; }
.exp.first { background: linear-gradient(#ccc, #ccc) 17px 14px / 6px 1px no-repeat, linear-gradient(#ccc, #ccc) 10px 20px / 1px 10px no-repeat; }
.tee { background: linear-gradient(#ccc, #ccc) 10px 0 / 1px 30px no-repeat, linear-gradient(#ccc, #ccc) 10px 14px / 12px 1px no-repeat; }
.last { background: linear-gradient(#ccc, #ccc) 10px 0 / 1px 15px no-repeat, linear-gradient(#ccc, #ccc) 10px 14px / 12px 1px no-repeat; }
.fi { width: 20px; height: 16px; margin: 0 0 3px 1px; }
.node span { margin-left: 10px; line-height: 21px; letter-spacing: -.12px; }
.node .sel { margin-left: 3px; padding: 0 6px; border: 1px solid #c0c0c0; background: #e6e6e6; }

/* File toolbar and grid */
.toolbar { height: 39px; flex: none; display: flex; align-items: center; background: linear-gradient(#ebebeb, #e3e3e3); border-bottom: 1px solid #c0c0c0; padding-bottom: 1px; }
.btn { height: 25px; display: flex; align-items: center; padding-left: 15px; border-right: 1px solid #c3d7e2; font: 14.700px/20px "Noto Sans CJK SC", sans-serif; color: #000; white-space: nowrap; }
.btn svg { width: 13px; height: 13px; margin-top: -1px; }
.btn span { margin: -3px 0 0 5px; }
.w96 { width: 97px; } .w83 { width: 83px; padding-left: 18px; } .w81 { width: 81px; padding-left: 16px; } .w98 { width: 98px; padding-left: 17px; } .w80 { width: 80px; padding-left: 15px; }
.caret { margin-left: 11px; border: 5px solid transparent; border-top-color: #444; border-bottom: 0; }
.addr { width: 387px; height: 27px; margin-left: 12px; padding: 1px 0 0 5px; border: 1px solid #bbb; background: #fff; line-height: 25px; font-size: 15px; letter-spacing: -.02px; white-space: nowrap; overflow: hidden; }
.row { display: grid; grid-template-columns: 50px 447px 187px 125px 125px; height: 33px; }
.thead { grid-template-columns: 51px 447px 187px 125px 125px 1fr; height: 38px; flex: none; padding-top: 1px; background: linear-gradient(#ececec, #e2e2e2) 0 1px no-repeat, #fff; }
.thead b { display: flex; align-items: center; padding: 0 0 2px 12px; font: 400 16px "Noto Sans CJK SC", sans-serif; letter-spacing: 1px; color: #000; border-right: 1px solid #c0c0c0; }
.thead b:last-child { border: 0; }
.scroller { flex: 1; min-height: 0; display: flex; justify-content: space-between; overflow: hidden; }
.rows { margin: -14px 0 0 1px; }
.row i { display: flex; align-items: center; margin: 1px 0; padding: 1px 5px 0; letter-spacing: -.3px; white-space: nowrap; border-right: 1px solid #fff; }
.row i:nth-child(1) { padding: 0 0 0 15px; }
.row i:nth-child(2) { letter-spacing: -.05px; }
.row .tight:nth-child(2) { letter-spacing: -.33px; }
.row i svg { width: 19px; height: 22px; }
.row i:nth-child(4) { justify-content: flex-end; letter-spacing: -.1px; }
.row i:nth-child(5) { justify-content: center; border: 0; padding-right: 6px; }
.odd i { background: #f0f0f0; }
.track { width: 19px; padding: 9px 0 9px 2px; background: #f1f1f1; display: flex; flex-direction: column; align-items: center; }
.thumb { width: 17px; height: 270px; margin-top: auto; background: #c1c1c1; }
.tri { width: 0; height: 0; border: 5px solid transparent; }
.tri.up { border-bottom: 5px solid #505050; border-top: 0; }
.tri.down { border-top: 5px solid #a3a3a3; border-bottom: 0; margin-top: 7px; }
.tri.left { border-right: 5px solid #333; border-left: 0; }
.tri.right { border-left: 5px solid #333; border-right: 0; }

/* Annotations drawn over the window */
.mark-box { position: absolute; left: 618px; top: 728px; width: 289px; height: 43px; border: 4px solid #ee1c24; border-radius: 2px; }
.mark-text { position: absolute; left: 905px; top: 465px; display: flex; align-items: baseline; color: #ee1c24; white-space: nowrap; line-height: 96px; -webkit-text-stroke: .5px #ee1c24; }
.mark-text span { font: 70px/96px "Noto Sans", sans-serif; letter-spacing: -1.2px; }
.mark-text em { font: 67px/96px "Noto Sans CJK SC", sans-serif; margin-left: 1px; }

/* Taskbar */
.taskbar { height: 50px; display: flex; align-items: center; background: #909799; color: #fff; font: 16px/22px "Noto Sans", "Noto Sans CJK SC", sans-serif; white-space: nowrap; }
.start { width: 21px; height: 21px; margin-left: 20px; }
.explorer { width: 28px; height: 24px; margin-left: 39px; }
.task { height: 50px; display: flex; align-items: center; border-bottom: 3px solid #8aa4b5; padding-top: 3px; }
.task span { letter-spacing: -.12px; }
.ff { width: 190px; margin-left: 23px; padding-left: 8px; gap: 5px; }
.burp { width: 190px; margin-left: 11px; padding-left: 11px; gap: 7px; font-size: 15.500px; }
.task svg { width: 29px; height: 29px; }
.burp svg { width: 24px; height: 24px; }
.on { width: 200px; margin-left: 6px; padding-left: 13px; gap: 5px; background: #a6abaf; font-size: 15px; }
.tray { flex: 1; display: flex; align-items: center; height: 50px; }
.weather { width: 26px; height: 26px; margin-left: 554px; }
.temp { font-size: 18px; margin-left: 12px; width: 51px; }
.sky { font-size: 18px; width: 65px; }
.icons { display: flex; gap: 10px; width: 290px; }
.icons svg { width: 20px; height: 20px; }
.ime { margin-left: 8px; width: 21px; font-size: 20px; }
.clock { width: 80px; margin-left: 10px; display: flex; flex-direction: column; align-items: center; line-height: 23px; letter-spacing: -.1px; }
.note { width: 21px; height: 20px; margin-left: 21px; }
.peek { width: 1px; height: 50px; margin-left: auto; margin-right: 5px; background: #c3c8ca; }
```
